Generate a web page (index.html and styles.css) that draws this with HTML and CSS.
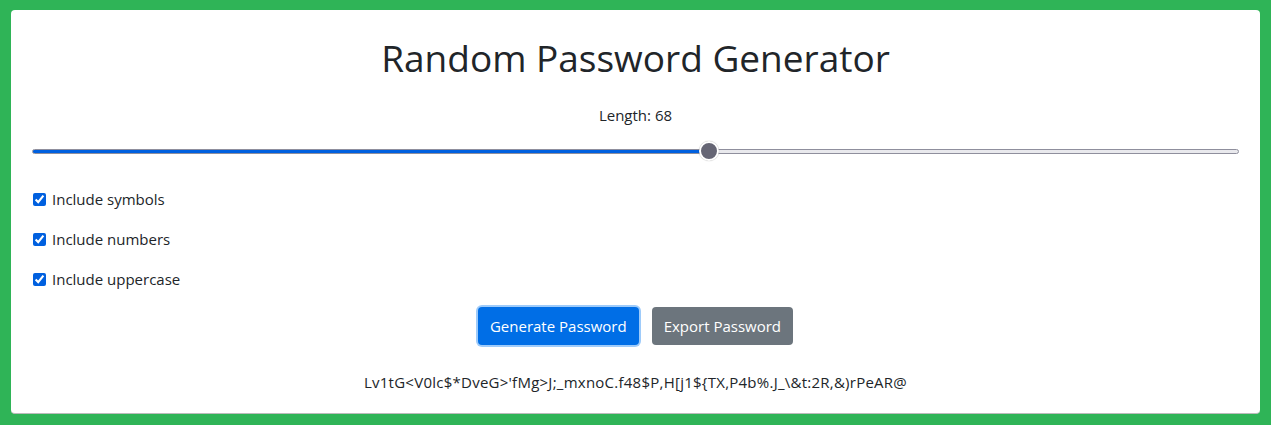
FILE: index.html
```html
<!DOCTYPE html>
<html>
<head>
<meta charset="utf-8">
<link rel="stylesheet" href="styles.css">
</head>
<body>
<div class="card">
  <h1 class="title">Random Password Generator</h1>
  <div class="length">Length: 68</div>
  <input class="slider" type="range" min="0" max="1000" step="any" value="562">
  <div class="options">
    <label class="opt"><input type="checkbox" checked><span>Include symbols</span></label>
    <label class="opt"><input type="checkbox" checked><span>Include numbers</span></label>
    <label class="opt"><input type="checkbox" checked><span>Include uppercase</span></label>
  </div>
  <div class="buttons">
    <button class="btn btn-primary">Generate Password</button>
    <button class="btn btn-secondary">Export Password</button>
  </div>
  <div class="password">Lv1tG&lt;V0lc$*DveG&gt;'fMg&gt;J;_mxnoC.f48$P,H[j1${TX,P4b%.J_\&amp;t:2R,&amp;)rPeAR@</div>
</div>
</body>
</html>
```

FILE: styles.css
```css
html, body {
  margin: 0;
  padding: 0;
}
body {
  background: #2fb457;
  padding: 10px 11px 11px 11px;
  font-family: "Open Sans", "Noto Sans", sans-serif;
  color: #212529;
  height: 425px;
  box-sizing: border-box;
}
.card {
  background: #fff;
  border-radius: 4px;
  height: 404px;
  box-sizing: border-box;
  padding: 20px 21px;
  display: flex;
  flex-direction: column;
  border-bottom: 1px solid #bbb;
}
.title {
  margin: 4px 0 0 0;
  text-align: center;
  font-weight: 400;
  font-size: 37px;
  line-height: 48px;
}
.length {
  text-align: center;
  font-size: 15px;
  line-height: 22px;
  margin-top: 22px;
}
.slider {
  -webkit-appearance: none;
  appearance: none;
  width: 100%;
  margin: 15px 0 0 0;
  height: 22px;
  background: transparent;
}
.slider::-webkit-slider-runnable-track {
  height: 5px;
  border-radius: 3px;
  border: 1px solid #8f8f9d;
  background: linear-gradient(to right, #0060df 0%, #0060df 56.1%, #e9e9ed 56.1%, #e9e9ed 100%);
  box-sizing: border-box;
}
.slider::-webkit-slider-thumb {
  -webkit-appearance: none;
  width: 20px;
  height: 20px;
  border-radius: 50%;
  background: #656574;
  border: 2px solid #fff;
  box-shadow: 0 0 1px rgba(0,0,0,.4);
  margin-top: -8.5px;
  box-sizing: border-box;
}
.options {
  display: flex;
  flex-direction: column;
  gap: 18px;
  margin-top: 27px;
}
.opt {
  display: flex;
  align-items: center;
  font-size: 15px;
  line-height: 22px;
  gap: 6px;
}
.opt input {
  margin: 0 0 0 1px;
  width: 13px;
  height: 13px;
  accent-color: #0060df;
}
.buttons {
  display: flex;
  justify-content: center;
  gap: 13px;
  margin-top: 17px;
}
.btn {
  font-family: inherit;
  font-size: 15px;
  height: 38px;
  padding: 0 11px;
  border-radius: 4px;
  border: 1px solid transparent;
  color: #fff;
}
.btn-primary {
  background: #006ee6;
  box-shadow: 0 0 0 2px #9ecbfa;
}
.btn-secondary {
  background: #6c757d;
}
.password {
  text-align: center;
  font-size: 15px;
  letter-spacing: 0.25px;
  line-height: 22px;
  margin-top: 26px;
}
```
